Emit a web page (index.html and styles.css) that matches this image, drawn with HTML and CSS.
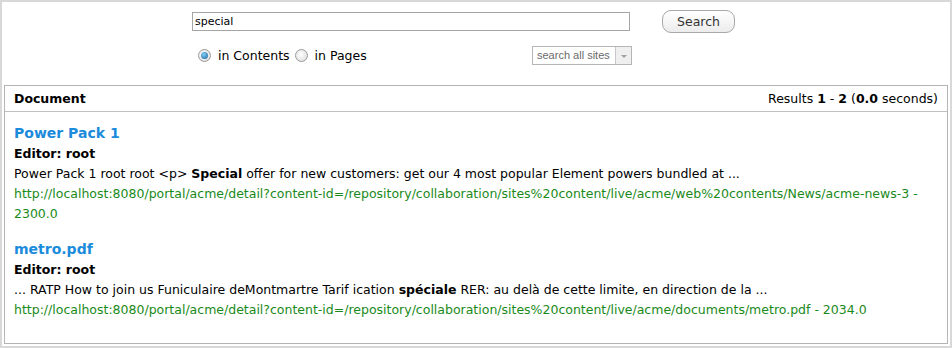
FILE: index.html
```html
<!DOCTYPE html>
<html lang="en">
<head>
  <meta charset="UTF-8">
  <title>Search</title>
  <link rel="stylesheet" href="styles.css">
</head>
<body>
  <div class="page">
    <div class="search-form">
      <div class="search-row">
        <input type="text" class="query" value="special">
        <button class="search-btn">Search</button>
      </div>
      <div class="option-row">
        <label class="opt"><span class="radio checked"></span>in Contents</label>
        <label class="opt"><span class="radio"></span>in Pages</label>
        <div class="site-select">
          <span class="site-label">search all sites</span>
          <span class="site-arrow"></span>
        </div>
      </div>
    </div>

    <div class="results">
      <div class="results-head">
        <span class="head-title">Document</span>
        <span class="head-info">Results <b>1</b> - <b>2</b> (<b>0.0</b> seconds)</span>
      </div>
      <div class="result">
        <a class="result-title" href="#">Power Pack 1</a>
        <div class="result-editor">Editor: root</div>
        <div class="result-text">Power Pack 1 root root &lt;p&gt; <b>Special</b> offer for new customers: get our 4 most popular Element powers bundled at ...</div>
        <div class="result-url">http://localhost:8080/portal/acme/detail?content-id=/repository/collaboration/sites%20content/live/acme/web%20contents/News/acme-news-3 - 2300.0</div>
      </div>
      <div class="result">
        <a class="result-title" href="#">metro.pdf</a>
        <div class="result-editor">Editor: root</div>
        <div class="result-text">... RATP How to join us Funiculaire deMontmartre Tarif ication <b>spéciale</b> RER: au delà de cette limite, en direction de la ...</div>
        <div class="result-url">http://localhost:8080/portal/acme/detail?content-id=/repository/collaboration/sites%20content/live/acme/documents/metro.pdf - 2034.0</div>
      </div>
    </div>
  </div>
</body>
</html>
```

FILE: styles.css
```css
* {
  box-sizing: border-box;
}
body {
  margin: 0;
  font-family: "DejaVu Sans", Verdana, sans-serif;
  font-size: 12.5px;
  color: #000;
  background: #fff;
}
.page {
  width: 952px;
  height: 348px;
  border: 2px solid #d8d8d8;
  background: #fff;
}
.search-form {
  height: 83px;
  padding-top: 8px;
}
.search-row {
  display: flex;
  align-items: flex-start;
  padding-left: 190px;
}
.query {
  margin-top: 2px;
  width: 438px;
  height: 19px;
  border: 1px solid #a5a5a5;
  padding: 0 2px;
  font-family: Tahoma, "DejaVu Sans", sans-serif;
  font-size: 11px;
  color: #000;
  outline: none;
}
.search-btn {
  margin-left: 32px;
  width: 73px;
  height: 23px;
  border: 1px solid #a8a8a8;
  border-radius: 9px;
  background: linear-gradient(#ffffff, #ececec);
  font-family: "DejaVu Sans", sans-serif;
  font-size: 12.5px;
  color: #333;
  padding: 0;
}
.option-row {
  display: flex;
  align-items: center;
  padding-left: 196px;
  margin-top: 13px;
}
.opt {
  display: flex;
  align-items: center;
  margin-right: 5px;
}
.radio {
  width: 13px;
  height: 13px;
  border-radius: 50%;
  border: 1px solid #9a9a9a;
  background: radial-gradient(circle at 40% 40%, #ffffff, #d8d8d8);
  margin-right: 7px;
  position: relative;
}
.radio.checked::after {
  content: "";
  position: absolute;
  left: 2px;
  top: 2px;
  width: 7px;
  height: 7px;
  border-radius: 50%;
  background: radial-gradient(circle at 40% 35%, #7fd0f5, #1a5f9a);
}
.site-select {
  margin-left: auto;
  margin-right: 318px;
  display: flex;
  width: 100px;
  height: 19px;
  border: 1px solid #b5b5b5;
}
.site-label {
  flex: 1;
  font-family: "Liberation Sans", Arial, sans-serif;
  font-size: 11px;
  color: #6a6a6a;
  line-height: 17px;
  padding-left: 4px;
}
.site-arrow {
  width: 16px;
  border-left: 1px solid #c8c8c8;
  background: #efefef;
  position: relative;
}
.site-arrow::after {
  content: "";
  position: absolute;
  left: 5px;
  top: 8px;
  border-left: 3px solid transparent;
  border-right: 3px solid transparent;
  border-top: 3px solid #a0a0a0;
}
.results {
  margin: 0 2px;
  height: 259px;
  border: 1px solid #b4b4b4;
}
.results-head {
  display: flex;
  justify-content: space-between;
  align-items: center;
  height: 26px;
  padding: 0 9px;
  border-bottom: 1px solid #c0c0c0;
}
.head-title {
  font-weight: bold;
}
.result {
  padding: 10px 9px 4px;
  line-height: 20px;
}
.result-title {
  display: block;
  font-size: 14px;
  font-weight: bold;
  color: #1b8bdc;
  text-decoration: none;
  line-height: 22px;
}
.result-editor {
  font-weight: bold;
}
.result-url {
  color: #1a8a1a;
}
```
